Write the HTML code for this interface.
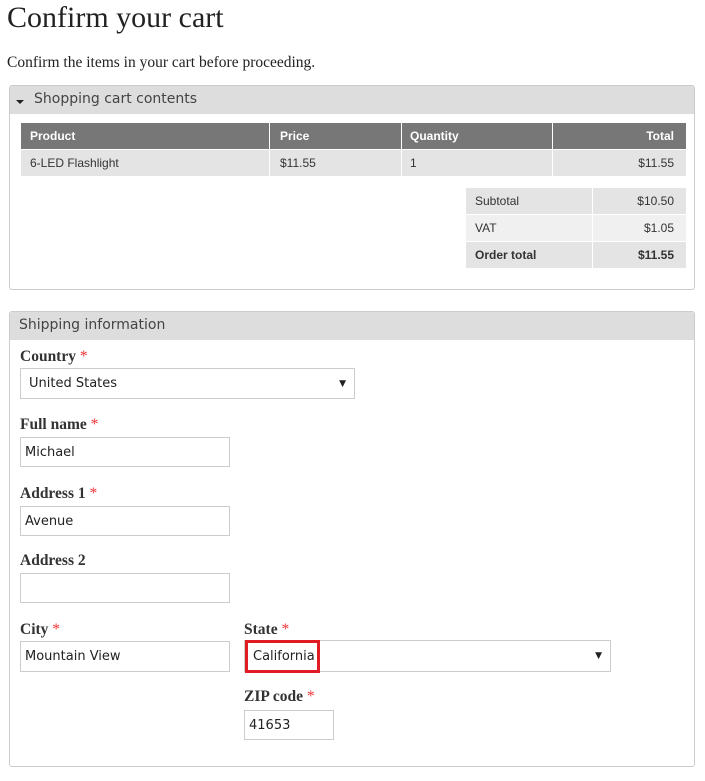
<!DOCTYPE html>
<html><head><style>
body{margin:0;background:#fff;width:705px;height:781px;position:relative;overflow:hidden;font-family:"Liberation Sans",sans-serif;}
.a{position:absolute;}
h1{position:absolute;left:7px;top:1px;margin:0;font:normal 30px "Liberation Serif",serif;color:#222;}
.fs{position:absolute;border:1px solid #ccc;border-radius:3px;}
.hd{position:absolute;left:0;right:0;top:0;background:#ddd;font:14px "DejaVu Sans",sans-serif;color:#444;padding-left:9px;box-sizing:border-box;}
.c{position:absolute;font-size:12px;color:#333;box-sizing:border-box;}
.th{background:#777;color:#fff;font-weight:bold;}
.td{background:#e4e4e4;}
.lb{position:absolute;font:bold 15.5px "Liberation Serif",serif;color:#333;}
.lb span{color:#e33;font-weight:normal;}
.in{position:absolute;border:1px solid #ccc;box-sizing:border-box;font:13px "DejaVu Sans",sans-serif;color:#222;padding-left:4px;display:flex;align-items:center;}
.ar{position:absolute;right:8px;font-size:9px;}
</style></head><body>
<h1>Confirm your cart</h1>
<div class="a" style="left:7px;top:54px;font:15.5px 'Liberation Serif',serif;color:#222">Confirm the items in your cart before proceeding.</div>

<div class="fs" style="left:9px;top:85px;width:684px;height:203px">
<div class="hd" style="height:28px;line-height:27px;padding-left:24px">Shopping cart contents</div>
<div class="a" style="left:6px;top:14px;width:0;height:0;border-left:4px solid transparent;border-right:4px solid transparent;border-top:4px solid #222"></div>
</div>
<div class="c th" style="left:21px;top:123px;width:248px;height:26px;line-height:26px;padding-left:9px">Product</div>
<div class="c th" style="left:270px;top:123px;width:131px;height:26px;line-height:26px;padding-left:10px">Price</div>
<div class="c th" style="left:402px;top:123px;width:150px;height:26px;line-height:26px;padding-left:8px">Quantity</div>
<div class="c th" style="left:553px;top:123px;width:133px;height:26px;line-height:26px;text-align:right;padding-right:12px">Total</div>
<div class="c td" style="left:21px;top:150px;width:248px;height:26px;line-height:26px;padding-left:9px">6-LED Flashlight</div>
<div class="c td" style="left:270px;top:150px;width:131px;height:26px;line-height:26px;padding-left:10px">$11.55</div>
<div class="c td" style="left:402px;top:150px;width:150px;height:26px;line-height:26px;padding-left:8px">1</div>
<div class="c td" style="left:553px;top:150px;width:133px;height:26px;line-height:26px;text-align:right;padding-right:12px">$11.55</div>

<div class="c td" style="left:466px;top:188px;width:126px;height:26px;line-height:26px;padding-left:9px">Subtotal</div>
<div class="c td" style="left:593px;top:188px;width:93px;height:26px;line-height:26px;text-align:right;padding-right:12px">$10.50</div>
<div class="c td" style="left:466px;top:215px;width:126px;height:26px;line-height:26px;padding-left:9px;background:#f0f0f0">VAT</div>
<div class="c td" style="left:593px;top:215px;width:93px;height:26px;line-height:26px;text-align:right;padding-right:12px;background:#f0f0f0">$1.05</div>
<div class="c td" style="left:466px;top:242px;width:126px;height:26px;line-height:26px;padding-left:9px;font-weight:bold">Order total</div>
<div class="c td" style="left:593px;top:242px;width:93px;height:26px;line-height:26px;text-align:right;padding-right:12px;font-weight:bold">$11.55</div>

<div class="fs" style="left:9px;top:311px;width:684px;height:454px">
<div class="hd" style="height:28px;line-height:27px">Shipping information</div>
</div>

<div class="lb" style="left:20px;top:348px">Country<span> *</span></div>
<div class="in" style="left:20px;top:368px;width:335px;height:31px;padding-left:8px">United States<span class="ar">▼</span></div>
<div class="lb" style="left:20px;top:416px">Full name<span> *</span></div>
<div class="in" style="left:20px;top:437px;width:210px;height:30px">Michael</div>
<div class="lb" style="left:20px;top:485px">Address 1<span> *</span></div>
<div class="in" style="left:20px;top:506px;width:210px;height:30px">Avenue</div>
<div class="lb" style="left:20px;top:552px">Address 2</div>
<div class="in" style="left:20px;top:573px;width:210px;height:30px"></div>
<div class="lb" style="left:20px;top:621px">City<span> *</span></div>
<div class="in" style="left:20px;top:641px;width:210px;height:31px">Mountain View</div>
<div class="lb" style="left:244px;top:621px">State<span> *</span></div>
<div class="in" style="left:244px;top:640px;width:367px;height:32px;padding-left:8px">California<span class="ar">▼</span></div>
<div class="a" style="left:245px;top:640px;width:75px;height:33px;border:3px solid #e01b24;box-sizing:border-box"></div>
<div class="lb" style="left:244px;top:688px">ZIP code<span> *</span></div>
<div class="in" style="left:244px;top:710px;width:90px;height:30px;padding-left:4px">41653</div>
</body></html>
